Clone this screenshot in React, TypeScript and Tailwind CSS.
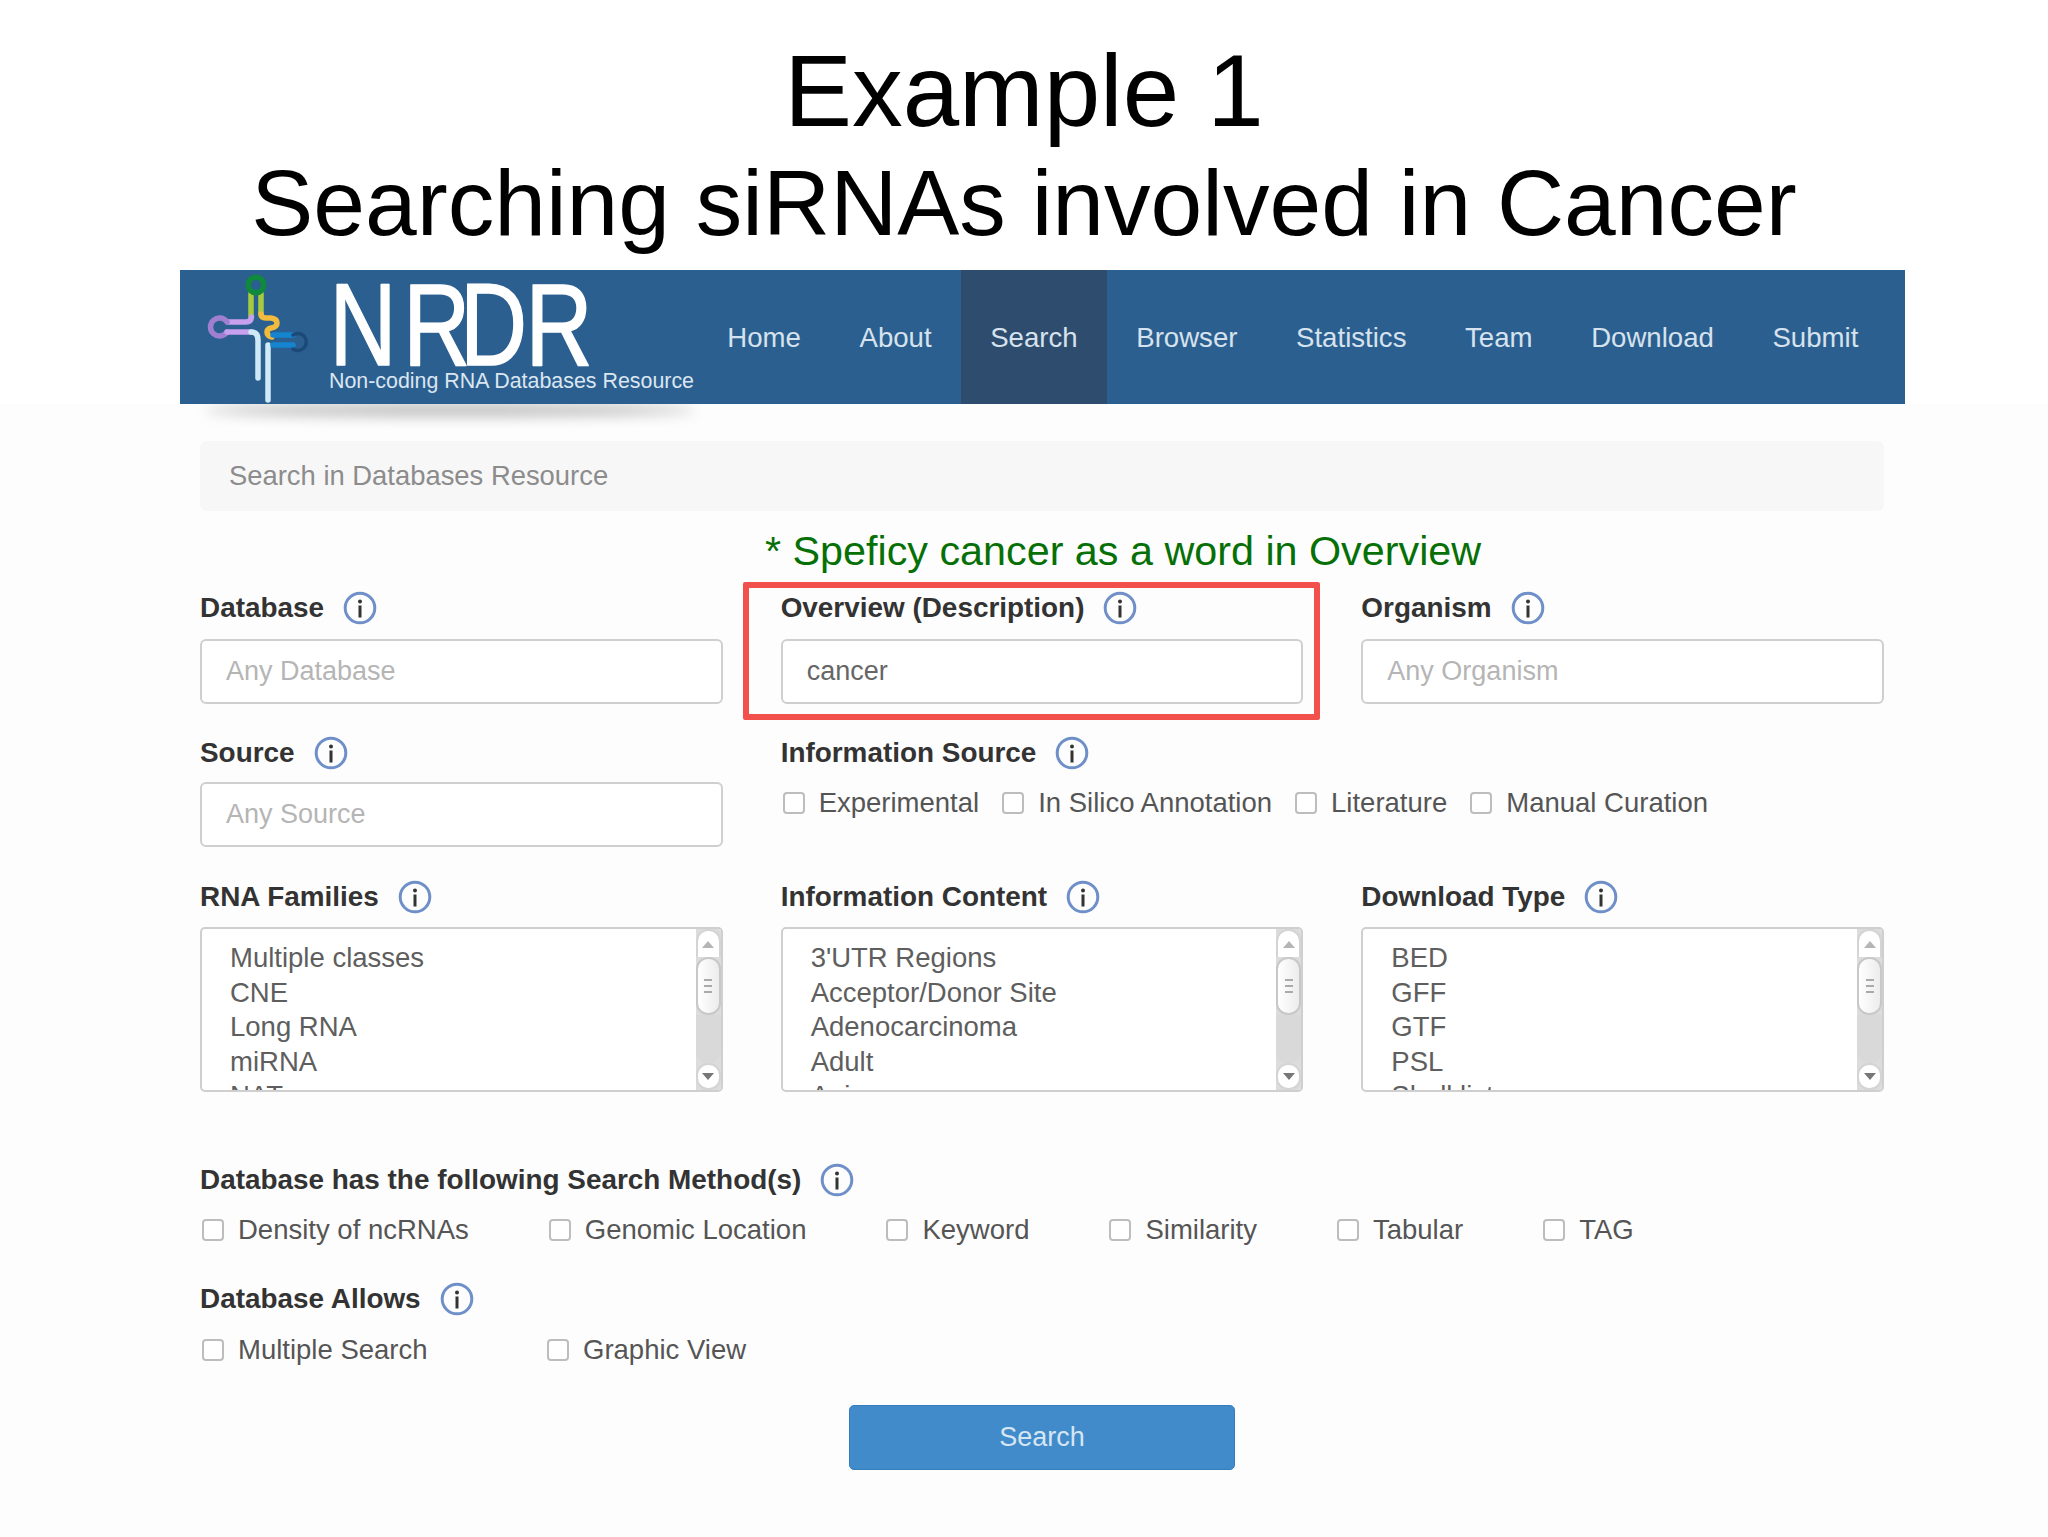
const FONT = "font-['Liberation_Sans',Arial,sans-serif]";

function Info() {
  return (
    <svg width="34" height="34" viewBox="0 0 34 34" className="shrink-0">
      <circle cx="17" cy="17" r="14.8" fill="none" stroke="#6f8fc9" strokeWidth="3" />
      <circle cx="17" cy="10.6" r="2" fill="#333" />
      <rect x="15.5" y="14.5" width="3" height="12" fill="#333" />
    </svg>
  );
}

function Label({ children }: { children: string }) {
  return (
    <div className="flex items-center gap-[19px] h-[34px] text-[27.9px] font-bold text-[#333] whitespace-nowrap">
      <span>{children}</span>
      <Info />
    </div>
  );
}

function TextBox({ value, placeholder }: { value?: string; placeholder?: string }) {
  return (
    <div className={`h-[65px] rounded-[6px] border-2 border-[#cfcfcf] bg-white px-6 flex items-center text-[27px] ${value ? "text-[#666]" : "text-[#b5b5b5]"}`}>
      {value ?? placeholder}
    </div>
  );
}

function Check({ label, className = "" }: { label: string; className?: string }) {
  return (
    <div className={`flex items-center gap-[14px] text-[27.5px] text-[#555] whitespace-nowrap ${className}`}>
      <span className="w-[22px] h-[22px] rounded-[4px] border-2 border-[#bdbdbd] bg-white shrink-0" />
      <span>{label}</span>
    </div>
  );
}

function Scrollbar() {
  return (
    <div className="w-[25px] shrink-0 flex flex-col bg-[#dcdcdc]">
      <div className="h-[28px] rounded-t-[12px] border-2 border-b-0 border-[#d4d4d4] bg-white flex items-center justify-center">
        <svg width="12" height="7" viewBox="0 0 12 7"><path d="M6 0 L12 7 L0 7 Z" fill="#b5b5b5" /></svg>
      </div>
      <div className="h-[58px] rounded-[12px] border-2 border-[#c8c8c8] bg-gradient-to-r from-white to-[#ececec] flex flex-col items-center justify-center gap-[4px]">
        <span className="w-[8px] h-[2px] bg-[#aaa]" />
        <span className="w-[8px] h-[2px] bg-[#aaa]" />
        <span className="w-[8px] h-[2px] bg-[#aaa]" />
      </div>
      <div className="flex-1 rounded-b-[12px] bg-[#d9d9d9]" />
      <div className="h-[27px] rounded-[12px] border-2 border-[#d4d4d4] bg-white flex items-center justify-center">
        <svg width="12" height="7" viewBox="0 0 12 7"><path d="M0 0 L12 0 L6 7 Z" fill="#777" /></svg>
      </div>
    </div>
  );
}

function ListBox({ items }: { items: string[] }) {
  return (
    <div className="h-[165px] rounded-[5px] border-2 border-[#cfcfcf] bg-white flex overflow-hidden">
      <div className="flex-1 overflow-hidden pl-[28px] pt-[12px] text-[27.5px] leading-[34.6px] text-[#5e5e5e]">
        {items.map((t) => (
          <div key={t}>{t}</div>
        ))}
      </div>
      <Scrollbar />
    </div>
  );
}

function Logo() {
  return (
    <svg width="518" height="134" viewBox="0 0 518 134" className="shrink-0">
      <g fill="none" strokeLinecap="round" strokeLinejoin="round" strokeWidth="5.5">
        <path d="M71 23 V46" stroke="#a8cb3e" />
        <path d="M81 23 V44" stroke="#a8cb3e" />
        <path d="M81 44 Q81 48 86 48 H91 Q97 49 97 53 Q97 57 91 58 Q87 59 87 62 Q87 66 92 67" stroke="#f2bb3d" />
        <circle cx="76" cy="15" r="7.8" stroke="#0f8a3c" />
        <path d="M48 52 H66 Q71 52 71.5 47" stroke="#c7a0ee" />
        <path d="M47 52 A9 9 0 1 0 47 62" stroke="#9e7fd0" />
        <path d="M47 62 H71" stroke="#c7a0ee" />
        <path d="M71 62 Q78 62 78 70 V108" stroke="#cfeaf7" />
        <path d="M88 75 V130" stroke="#cfeaf7" />
        <path d="M93 65 H113" stroke="#1585cf" />
        <path d="M93 75 H113" stroke="#1585cf" />
        <path d="M113 65 A8.5 8.5 0 1 1 113 79" stroke="#1c4a78" strokeWidth="3.5" />
      </g>
      <text transform="translate(0,95) scale(0.8,1)" x="187 279 350 432" y="0" fontSize="116" fill="#ffffff" stroke="#ffffff" strokeWidth="1.6" strokeLinejoin="round" fontFamily="'Liberation Sans', Arial, sans-serif">NRDR</text>
      <text x="149" y="118" fontSize="21.4" fill="#dbe6f0" fontFamily="'Liberation Sans', Arial, sans-serif">Non-coding RNA Databases Resource</text>
    </svg>
  );
}

const NAV = ["Home", "About", "Search", "Browser", "Statistics", "Team", "Download", "Submit"];

function Header() {
  return (
    <div className="relative ml-[180px] w-[1725px]">
      <div className="absolute left-[25px] top-[122px] w-[490px] h-[12px] rounded-[50%] shadow-[0_12px_14px_rgba(0,0,0,0.28)]" />
      <div className="relative h-[134px] bg-[#2b5f90] flex">
        <Logo />
        <nav className="flex text-[27.6px] text-[#d6e2ed]">
          {NAV.map((n) => (
            <div key={n} className={`px-[29.3px] pt-[1px] flex items-center ${n === "Search" ? "bg-[#2e4c6d]" : ""}`}>
              {n}
            </div>
          ))}
        </nav>
      </div>
    </div>
  );
}

export default function App() {
  return (
    <div className={`${FONT} relative w-[2048px] h-[1537px] bg-white overflow-hidden`}>
      <div className="h-[270px] pt-[26px] text-center text-black">
        <div className="text-[101.5px] leading-[130px]">Example 1</div>
        <div className="text-[93px] leading-[94px]">Searching siRNAs involved in Cancer</div>
      </div>
      <Header />
      <div className="h-[1133px] bg-[#fdfdfd] pl-[200px] pr-[164px] pt-[37px]">
        <div className="h-[70px] rounded-[6px] bg-[#f7f7f7] pl-[29px] flex items-center text-[27.4px] text-[#8c8c8c]">
          Search in Databases Resource
        </div>
        <div className="h-[60px] pl-[565px] pt-[15px] text-[41.3px] leading-[50px] text-[#067006] whitespace-nowrap">
          * Speficy cancer as a word in Overview
        </div>
        <div className="mt-[20px] grid grid-cols-3 gap-x-[58px]">
          <div>
            <Label>Database</Label>
            <div className="mt-[14px]"><TextBox placeholder="Any Database" /></div>
          </div>
          <div>
            <Label>Overview (Description)</Label>
            <div className="mt-[14px]"><TextBox value="cancer" /></div>
          </div>
          <div>
            <Label>Organism</Label>
            <div className="mt-[14px]"><TextBox placeholder="Any Organism" /></div>
          </div>

          <div className="mt-[32px]">
            <Label>Source</Label>
            <div className="mt-[12px]"><TextBox placeholder="Any Source" /></div>
          </div>
          <div className="col-span-2 mt-[32px]">
            <Label>Information Source</Label>
            <div className="mt-[12px] flex gap-[23px] pl-[2px]">
              <Check label="Experimental" />
              <Check label="In Silico Annotation" />
              <Check label="Literature" />
              <Check label="Manual Curation" />
            </div>
          </div>

          <div className="mt-[33px]">
            <Label>RNA Families</Label>
            <div className="mt-[13px]"><ListBox items={["Multiple classes", "CNE", "Long RNA", "miRNA", "NAT"]} /></div>
          </div>
          <div className="mt-[33px]">
            <Label>Information Content</Label>
            <div className="mt-[13px]"><ListBox items={["3'UTR Regions", "Acceptor/Donor Site", "Adenocarcinoma", "Adult", "Aging"]} /></div>
          </div>
          <div className="mt-[33px]">
            <Label>Download Type</Label>
            <div className="mt-[13px]"><ListBox items={["BED", "GFF", "GTF", "PSL", "Shell list"]} /></div>
          </div>
        </div>

        <div className="mt-[71px]">
          <Label>Database has the following Search Method(s)</Label>
          <div className="mt-[17px] flex gap-[80px] pl-[2px] h-[32px]">
            <Check label="Density of ncRNAs" />
            <Check label="Genomic Location" />
            <Check label="Keyword" />
            <Check label="Similarity" />
            <Check label="Tabular" />
            <Check label="TAG" />
          </div>
        </div>
        <div className="mt-[36px]">
          <Label>Database Allows</Label>
          <div className="mt-[18px] flex pl-[2px] h-[32px]">
            <Check label="Multiple Search" className="w-[345px]" />
            <Check label="Graphic View" />
          </div>
        </div>
        <div className="mt-[39px] flex justify-center">
          <div className="w-[386px] h-[65px] rounded-[5px] bg-[#428bca] border border-[#357ebd] text-[27px] text-[#d5e5f3] flex items-center justify-center">
            Search
          </div>
        </div>
      </div>
      <div className="absolute left-[743px] top-[582px] w-[577px] h-[138px] border-[6px] border-[#f2504b] rounded-[2px]" />
    </div>
  );
}
